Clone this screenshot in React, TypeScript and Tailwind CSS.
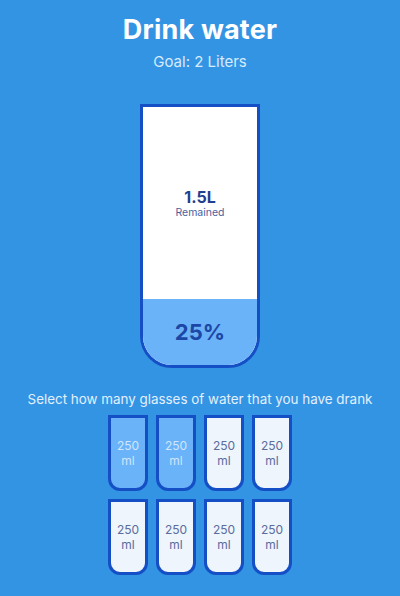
import React from 'react';

const App: React.FC = () => {
  const total = 8;
  const full = 2;
  const cups = Array.from({ length: total }, (_, i) => i < full);

  return (
    <div className="min-h-[596px] w-full bg-[#3494e4] text-white font-['Inter',sans-serif] flex flex-col items-center">
      <h1 className="mt-[14px] text-[27px] leading-[32px] font-bold tracking-[0.2px]">Drink water</h1>
      <h3 className="mt-[6px] text-[15px] leading-[20px] font-normal text-[#d6ebfc]">Goal: 2 Liters</h3>

      {/* Big cup */}
      <div className="mt-[32px] w-[120px] h-[264px] bg-white border-[3px] border-[#144fc6] rounded-b-[32px] flex flex-col overflow-hidden">
        <div className="flex-1 flex flex-col items-center justify-center text-center">
          <span className="text-[16px] leading-[18px] font-bold text-[#1f3f8f]">1.5L</span>
          <small className="text-[10.5px] leading-[13px] text-[#4a5f9e]">Remained</small>
        </div>
        <div className="h-[66px] bg-[#6ab3f8] flex items-center justify-center text-[22px] font-bold text-[#1c47a6]">
          25%
        </div>
      </div>

      <p className="mt-[23px] mb-[4px] text-[13.4px] leading-[16px] text-center text-[#e2f0fd] whitespace-nowrap">
        Select how many glasses of water that you have drank
      </p>

      <div className="w-[224px] flex flex-wrap items-center justify-center">
        {cups.map((isFull, i) => (
          <div
            key={i}
            className={`m-1 w-10 h-[76px] border-[3px] border-[#144fc6] rounded-b-[12px] flex items-center justify-center text-center text-[12px] leading-[15px] ${
              isFull ? 'bg-[#6ab3f8] text-[#cfe6fd]' : 'bg-[#eef5fd] text-[#5b6b9c]'
            }`}
          >
            250
            <br />
            ml
          </div>
        ))}
      </div>
    </div>
  );
};

export default App;
